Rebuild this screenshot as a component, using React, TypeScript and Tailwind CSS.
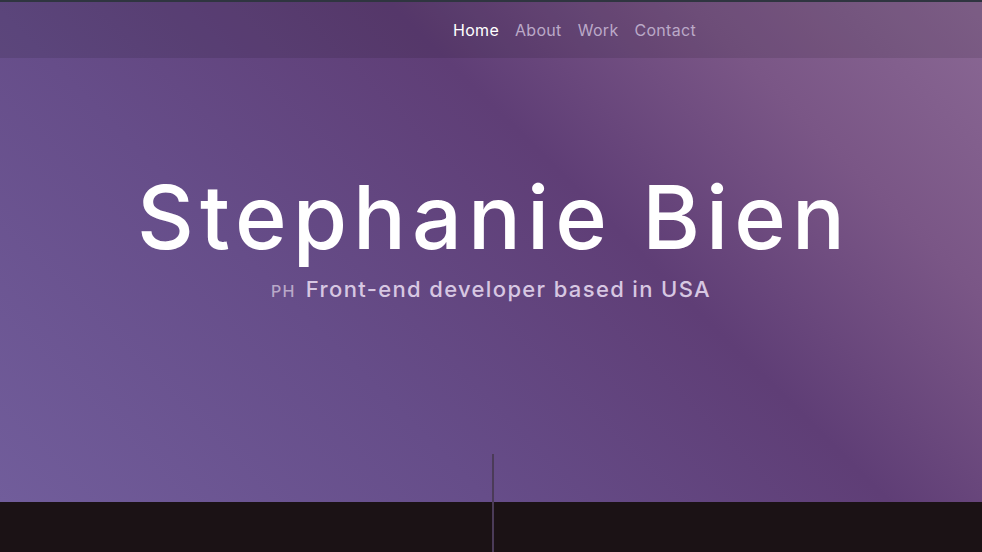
import React from 'react';

const links = ['Home', 'About', 'Work', 'Contact'];

const App = () => {
    return (
        <div className="w-[982px] h-[552px] overflow-hidden relative bg-[#1b1215]" style={{ fontFamily: 'Inter, "Noto Sans", sans-serif' }}>
            <div className="h-[2px] bg-[#2f3540]" />
            <section className="h-[500px] relative bg-[linear-gradient(45deg,#715d9b_0%,#664d89_33%,#5f3e76_60%,#7a5686_80%,#8a6894_100%)]">
                <nav className="h-[56px] bg-black/10 flex items-center pl-[453px] gap-[16px] text-[16px] tracking-[0.3px]">
                    {links.map((l, i) => (
                        <a key={l} href="#" className={i === 0 ? 'text-white' : 'text-[#bba9c8]'}>
                            {l}
                        </a>
                    ))}
                </nav>
                <div className="flex flex-col items-center pt-[115px]">
                    <h1 className="text-white text-[88px] leading-none font-medium tracking-[6px] pl-[6px]">Stephanie Bien</h1>
                    <p className="mt-[12px] text-[22px] font-medium text-[#d7c7e2] flex items-baseline gap-[10px] tracking-[1.35px]">
                        <span className="text-[16px] text-[#b9a8c8]">PH</span>
                        Front-end developer based in USA
                    </p>
                </div>
            </section>
            <div className="absolute left-[492px] top-[454px] w-[2px] h-[100px] bg-[#4b3b58]" />
        </div>
    );
};

export default App;
